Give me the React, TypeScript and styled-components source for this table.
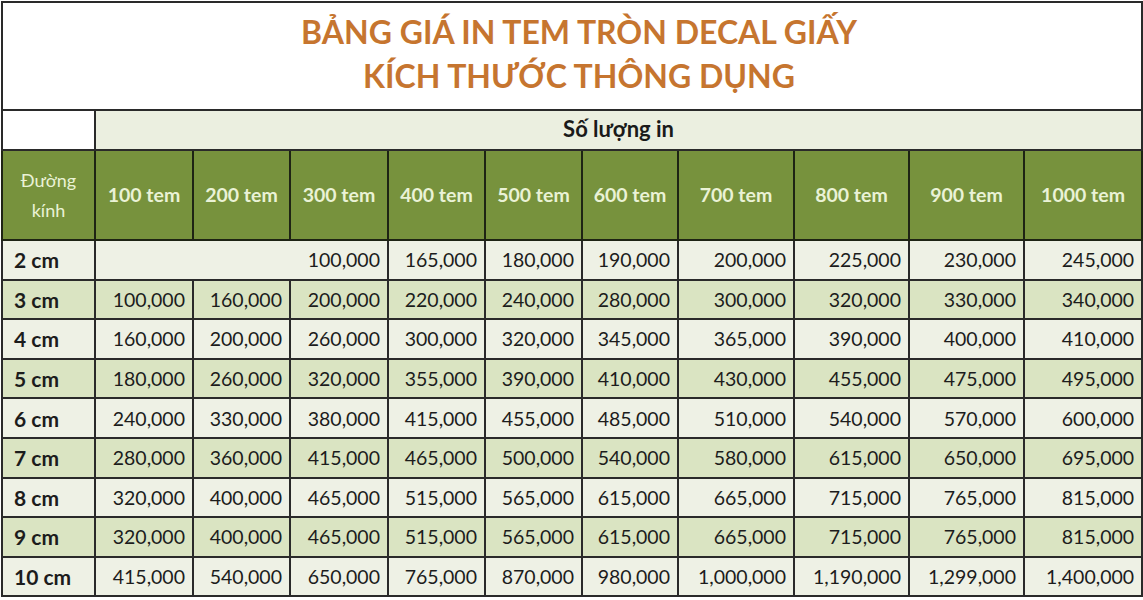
import styled, { createGlobalStyle } from "styled-components";

const GlobalStyle = createGlobalStyle`
  html, body {
    margin: 0;
    padding: 0;
    background: #ffffff;
  }
  body {
    font-family: Lato, "Noto Sans", sans-serif;
  }
`;

const widths = [93, 98, 97, 98, 97, 97, 96, 116, 115, 115, 118];
const sizes = ["100 tem", "200 tem", "300 tem", "400 tem", "500 tem", "600 tem", "700 tem", "800 tem", "900 tem", "1000 tem"];

const rows: { label: string; prices: string[] }[] = [
  { label: "2 cm", prices: ["100,000", "165,000", "180,000", "190,000", "200,000", "225,000", "230,000", "245,000"] },
  { label: "3 cm", prices: ["100,000", "160,000", "200,000", "220,000", "240,000", "280,000", "300,000", "320,000", "330,000", "340,000"] },
  { label: "4 cm", prices: ["160,000", "200,000", "260,000", "300,000", "320,000", "345,000", "365,000", "390,000", "400,000", "410,000"] },
  { label: "5 cm", prices: ["180,000", "260,000", "320,000", "355,000", "390,000", "410,000", "430,000", "455,000", "475,000", "495,000"] },
  { label: "6 cm", prices: ["240,000", "330,000", "380,000", "415,000", "455,000", "485,000", "510,000", "540,000", "570,000", "600,000"] },
  { label: "7 cm", prices: ["280,000", "360,000", "415,000", "465,000", "500,000", "540,000", "580,000", "615,000", "650,000", "695,000"] },
  { label: "8 cm", prices: ["320,000", "400,000", "465,000", "515,000", "565,000", "615,000", "665,000", "715,000", "765,000", "815,000"] },
  { label: "9 cm", prices: ["320,000", "400,000", "465,000", "515,000", "565,000", "615,000", "665,000", "715,000", "765,000", "815,000"] },
  { label: "10 cm", prices: ["415,000", "540,000", "650,000", "765,000", "870,000", "980,000", "1,000,000", "1,190,000", "1,299,000", "1,400,000"] },
];

const PriceTable = styled.table`
  border-collapse: collapse;
  table-layout: fixed;
  width: 1140px;
  margin: 1px 0 0 1px;
  font-family: Lato, "Noto Sans", sans-serif;
  color: #1c1c1c;
`;

const TitleCell = styled.td`
  height: 102px;
  background: #ffffff;
  border: 2px solid #2a2a2a;
  text-align: center;
  vertical-align: middle;
  padding: 0 0 4px;
`;

const TitleLine = styled.div`
  font-size: 32px;
  font-weight: 700;
  line-height: 44px;
  color: #c6752f;
  padding-left: 14px;
`;

const BlankCell = styled.td`
  background: #ffffff;
  border: 2px solid #2a2a2a;
  height: 35px;
`;

const QuantityCell = styled.td`
  background: #ebefe0;
  border: 2px solid #2a2a2a;
  text-align: center;
  font-size: 22px;
  font-weight: 700;
  color: #1a1a1a;
  height: 35px;
  padding: 0 0 3px;
`;

const HeadCell = styled.th<{ $regular?: boolean }>`
  background: #77923d;
  color: #eaf2d6;
  border: 2px solid #1e2414;
  height: 88px;
  padding: 0;
  font-size: ${(p) => (p.$regular ? "18px" : "19.5px")};
  font-weight: ${(p) => (p.$regular ? 400 : 700)};
  line-height: 30px;
  text-align: center;
  vertical-align: middle;
`;

const Row = styled.tr<{ $alt: boolean }>`
  background: ${(p) => (p.$alt ? "#dae4c2" : "#eef1e5")};
`;

const LabelCell = styled.td`
  border: 2px solid #2a2a2a;
  height: 37.6px;
  padding: 0 0 0 11px;
  font-size: 21px;
  font-weight: 700;
  text-align: left;
  white-space: nowrap;
`;

const PriceCell = styled.td`
  border: 2px solid #2a2a2a;
  height: 37.6px;
  padding: 0 7px 0 0;
  font-size: 19.5px;
  font-weight: 400;
  text-align: right;
  white-space: nowrap;
`;

export default function App() {
  return (
    <>
      <GlobalStyle />
      <PriceTable>
        <colgroup>
          {widths.map((w, i) => (
            <col key={i} style={{ width: w }} />
          ))}
        </colgroup>
        <tbody>
          <tr>
            <TitleCell colSpan={11}>
              <TitleLine>BẢNG GIÁ IN TEM TRÒN DECAL GIẤY</TitleLine>
              <TitleLine>KÍCH THƯỚC THÔNG DỤNG</TitleLine>
            </TitleCell>
          </tr>
          <tr>
            <BlankCell />
            <QuantityCell colSpan={10}>Số lượng in</QuantityCell>
          </tr>
          <tr>
            <HeadCell $regular>
              Đường
              <br />
              kính
            </HeadCell>
            {sizes.map((s) => (
              <HeadCell key={s}>{s}</HeadCell>
            ))}
          </tr>
          {rows.map((r, i) => (
            <Row key={r.label} $alt={i % 2 === 1}>
              <LabelCell>{r.label}</LabelCell>
              {r.prices.length < 10 && <PriceCell colSpan={3}>{r.prices[0]}</PriceCell>}
              {(r.prices.length < 10 ? r.prices.slice(1) : r.prices).map((p, j) => (
                <PriceCell key={j}>{p}</PriceCell>
              ))}
            </Row>
          ))}
        </tbody>
      </PriceTable>
    </>
  );
}
